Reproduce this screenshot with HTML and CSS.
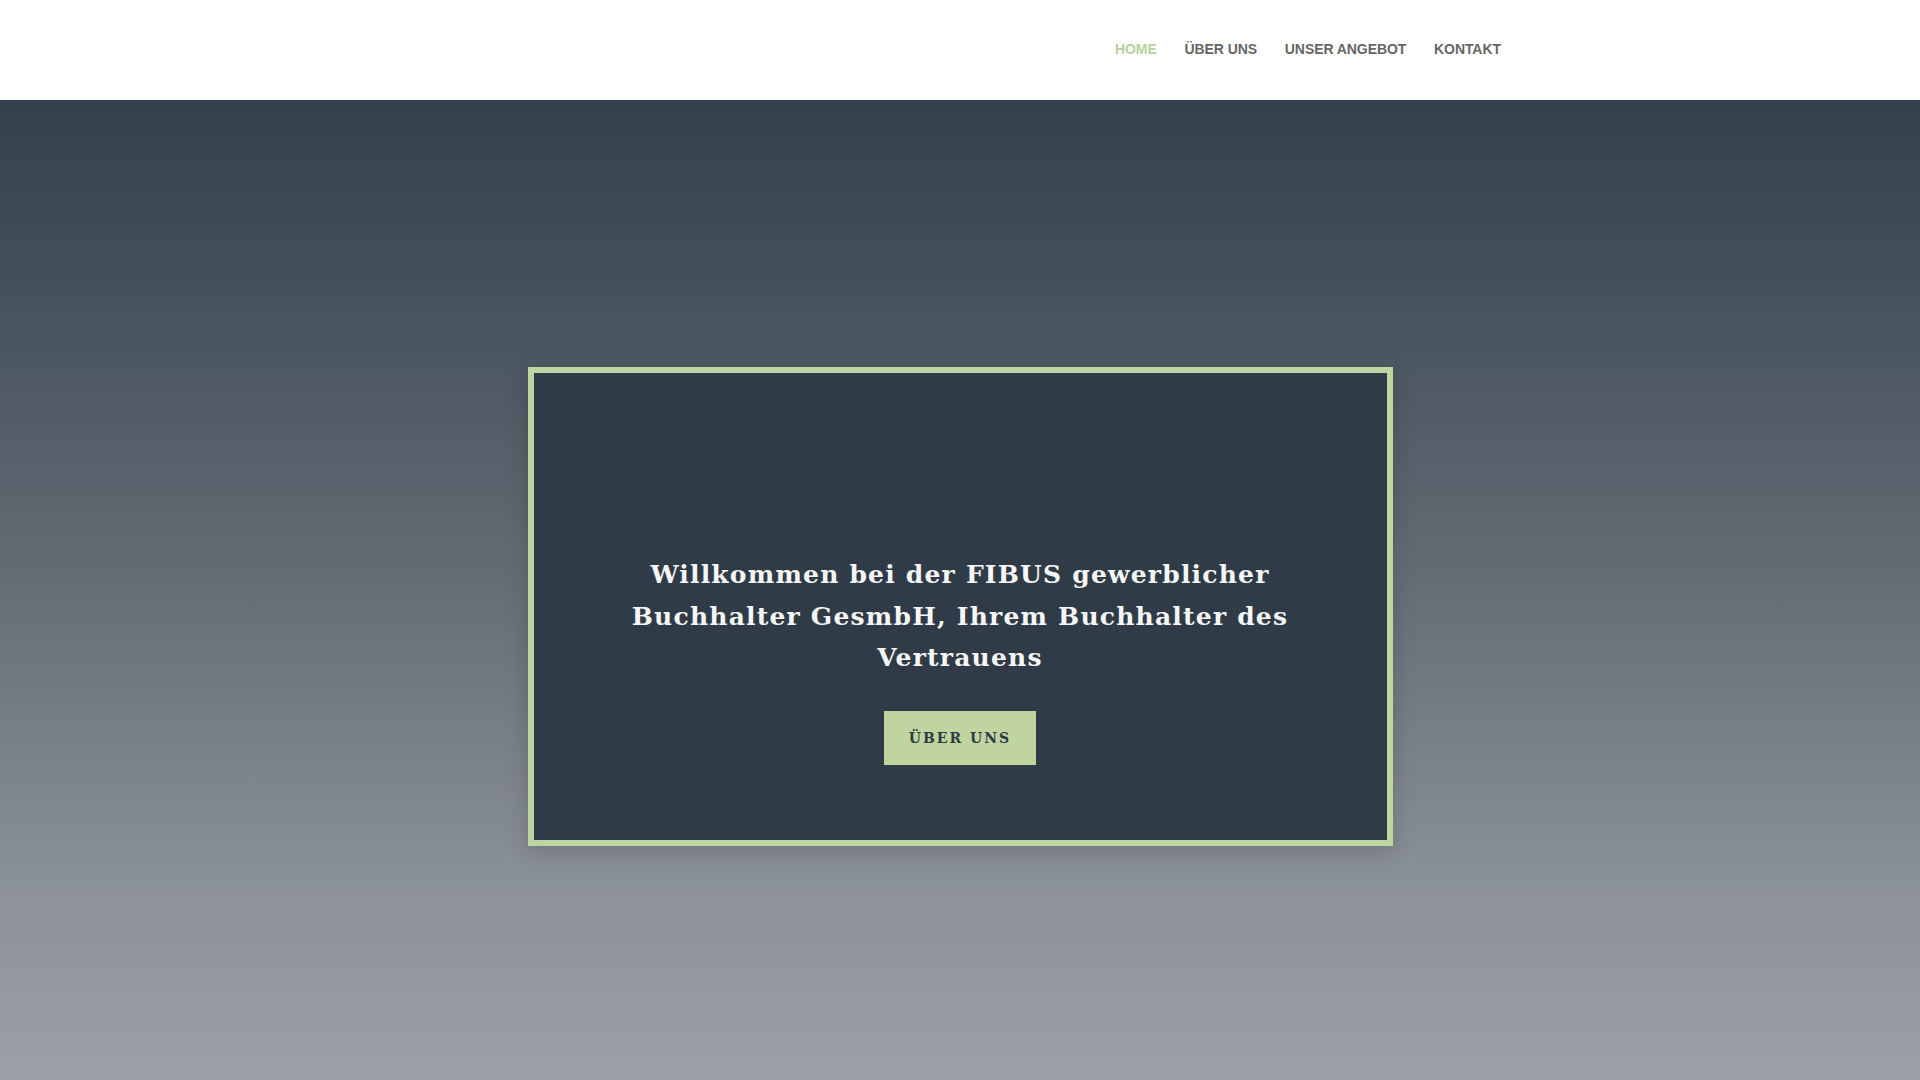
FILE: index.html
```html
<!DOCTYPE html>
<html lang="de">
<head>
<meta charset="utf-8">
<title>FIBUS gewerblicher Buchhalter GesmbH</title>
<link rel="stylesheet" href="styles.css">
</head>
<body>
<header class="site-header">
  <nav class="main-nav">
    <a class="nav-link active" href="#">HOME</a>
    <a class="nav-link" href="#">ÜBER UNS</a>
    <a class="nav-link" href="#">UNSER ANGEBOT</a>
    <a class="nav-link" href="#">KONTAKT</a>
  </nav>
</header>
<main class="hero">
  <section class="hero-box">
    <h1 class="hero-title">Willkommen bei der FIBUS gewerblicher Buchhalter GesmbH, Ihrem Buchhalter des Vertrauens</h1>
    <a class="hero-button" href="#">ÜBER UNS</a>
  </section>
</main>
</body>
</html>
```
FILE: styles.css
```css
* { box-sizing: border-box; }
html, body { margin: 0; padding: 0; }
body {
  width: 1920px;
  height: 1080px;
  overflow: hidden;
  font-family: "Liberation Sans", Arial, sans-serif;
  background: #fff;
}
.site-header {
  height: 100px;
  background: #fff;
  display: flex;
  align-items: center;
}
.main-nav {
  display: flex;
  gap: 27.75px;
  margin-left: 1115px;
  margin-top: -2px;
}
.nav-link {
  font-size: 14px;
  font-weight: bold;
  color: #666666;
  text-decoration: none;
  letter-spacing: -0.07px;
}
.nav-link.active { color: #b7d19d; }
.hero {
  height: 980px;
  background: linear-gradient(to bottom, #33414c 0%, #4a5660 25%, #6b737c 55%, #8b9198 80%, #9aa0a4 100%);
  display: flex;
  justify-content: center;
  align-items: flex-start;
  padding-top: 267px;
}
.hero-box {
  width: 865px;
  height: 479px;
  border: 6px solid #bcd5a1;
  background: #2f3c47;
  box-shadow: 0 6px 22px rgba(0, 0, 0, 0.16);
  display: flex;
  flex-direction: column;
  align-items: center;
  padding: 181px 60px 0;
}
.hero-title {
  margin: 0;
  font-family: "DejaVu Serif", "Liberation Serif", serif;
  font-weight: bold;
  font-size: 25px;
  line-height: 41.5px;
  letter-spacing: 1.2px;
  color: #f6f6f6;
  text-align: center;
  width: 700px;
}
.hero-button {
  margin-top: 32px;
  width: 152px;
  height: 54px;
  background: #bfd49e;
  color: #2e3b45;
  font-family: "DejaVu Serif", "Liberation Serif", serif;
  font-weight: bold;
  font-size: 14px;
  letter-spacing: 2px;
  text-decoration: none;
  display: flex;
  align-items: center;
  justify-content: center;
}
```
